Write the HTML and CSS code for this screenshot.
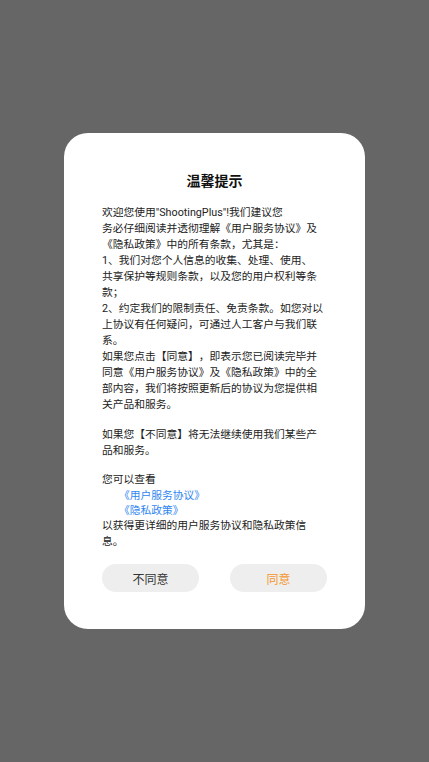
FILE: index.html
```html
<!DOCTYPE html>
<html lang="zh-CN">
<head>
<meta charset="utf-8">
<title>温馨提示</title>
<link rel="stylesheet" href="styles.css">
</head>
<body>
<div class="overlay">
  <div class="dialog">
    <div class="title">温馨提示</div>
    <div class="content">
      <p class="para">欢迎您使用"ShootingPlus"!我们建议您<br>务必仔细阅读并透彻理解《用户服务协议》及《隐私政策》中的所有条款，尤其是：<br>1、我们对您个人信息的收集、处理、使用、<br>共享保护等规则条款，以及您的用户权利等条款；<br>2、约定我们的限制责任、免责条款。如您对以上协议有任何疑问，可通过人工客户与我们联系。<br>如果您点击【同意】，即表示您已阅读完毕并同意《用户服务协议》及《隐私政策》中的全部内容，我们将按照更新后的协议为您提供相关产品和服务。</p>
      <p class="para para-2">如果您【不同意】将无法继续使用我们某些产品和服务。</p>
      <div class="para para-3">
        <div>您可以查看</div>
        <div class="link">《用户服务协议》</div>
        <div class="link">《隐私政策》</div>
        <div>以获得更详细的用户服务协议和隐私政策信息。</div>
      </div>
    </div>
    <div class="actions">
      <button class="btn btn-cancel">不同意</button>
      <button class="btn btn-ok">同意</button>
    </div>
  </div>
</div>
</body>
</html>
```

FILE: styles.css
```css
html, body {
  margin: 0;
  padding: 0;
  height: 100%;
}
body {
  background: #666666;
  font-family: Roboto, "Noto Sans CJK SC", "Noto Sans", sans-serif;
}
.overlay {
  height: 100%;
  display: flex;
  align-items: center;
  justify-content: center;
}
.dialog {
  box-sizing: border-box;
  width: 301px;
  background: #ffffff;
  border-radius: 24px;
  padding: 38px 38px 37px;
  display: flex;
  flex-direction: column;
}
.title {
  font-size: 14px;
  line-height: 20px;
  font-weight: bold;
  color: #111111;
  text-align: center;
}
.content {
  margin-top: 14px;
  font-size: 10.75px;
  line-height: 16px;
  color: #222222;
  display: flex;
  flex-direction: column;
  text-spacing-trim: space-all;
}
.para {
  margin: 0;
}
.para-2 {
  margin-top: 14px;
}
.para-3 {
  margin-top: 13px;
}
.link {
  color: #2f86f0;
  padding-left: 17px;
  line-height: 15px;
}
.actions {
  margin-top: 14px;
  display: flex;
  justify-content: space-between;
}
.btn {
  width: 97px;
  height: 28px;
  border: none;
  border-radius: 14px;
  background: #eeeeee;
  font-family: Roboto, "Noto Sans CJK SC", "Noto Sans", sans-serif;
  font-size: 12px;
  padding: 0;
}
.btn-cancel {
  color: #333333;
}
.btn-ok {
  color: #f5962f;
}
```
